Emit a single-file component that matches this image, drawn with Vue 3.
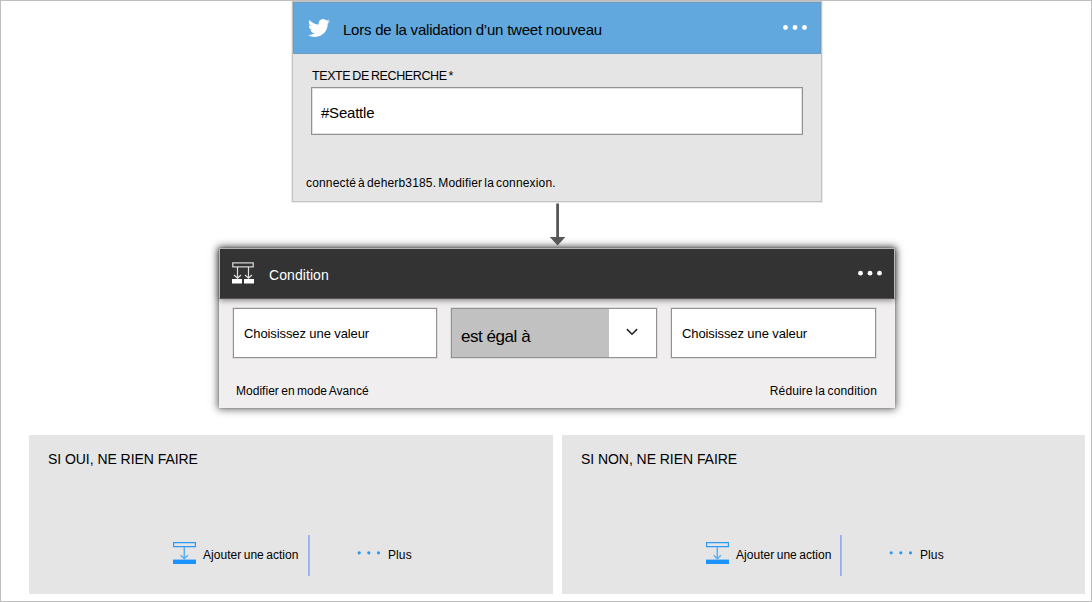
<script setup>
const branches = [
  { key: 'yes', title: 'SI OUI, NE RIEN FAIRE' },
  { key: 'no', title: 'SI NON, NE RIEN FAIRE' }
]
</script>

<template>
  <main class="designer">
    <section class="trigger">
      <header class="trigger-head">
        <svg class="bird" viewBox="0 0 24 24" width="24" height="24">
          <path fill="#fff" d="M23.95 4.57a10 10 0 0 1-2.82.77 4.96 4.96 0 0 0 2.16-2.72c-.95.55-2 .96-3.13 1.18a4.92 4.92 0 0 0-8.38 4.48C7.69 8.1 4.07 6.13 1.64 3.16a4.82 4.82 0 0 0-.67 2.48c0 1.71.87 3.21 2.19 4.1a4.9 4.9 0 0 1-2.23-.62v.06a4.92 4.92 0 0 0 3.95 4.83 5 5 0 0 1-2.21.08 4.94 4.94 0 0 0 4.6 3.42A9.87 9.87 0 0 1 0 19.54a14 14 0 0 0 7.55 2.21c9.05 0 14-7.5 14-13.98 0-.21 0-.42-.02-.63a9.94 9.94 0 0 0 2.42-2.57z" />
        </svg>
        <h2 class="trigger-title">Lors de la validation d’un tweet nouveau</h2>
        <svg class="dots" width="26" height="6" viewBox="0 0 26 6" fill="#fff">
          <circle cx="3.5" cy="2.5" r="2.4" /><circle cx="13" cy="2.5" r="2.4" /><circle cx="22.5" cy="2.5" r="2.4" />
        </svg>
      </header>
      <div class="trigger-body">
        <label class="field-label">TEXTE DE RECHERCHE<span class="star">*</span></label>
        <div class="search-field">#Seattle</div>
        <p class="connection">connecté à deherb3185. Modifier la connexion.</p>
      </div>
    </section>

    <svg class="arrow" width="18" height="45" viewBox="0 0 18 45" fill="#58585a">
      <path d="M7.2 1.5h2.8V35h6.4L8.6 43.5.8 35h6.4z" />
    </svg>

    <section class="condition">
      <header class="condition-head">
        <svg class="branch-icon" width="22" height="22" viewBox="0 0 22 22" fill="none">
          <path stroke="#d4d4d4" stroke-width="1.3" d="M.8.8h20.4v4H.8z" />
          <path stroke="#e0e0e0" stroke-width="1.2" d="M5.5 5v11M2 13l3.5 3.3L9 13M16.5 5v11M13 13l3.5 3.3L20 13" />
          <path fill="#fff" d="M0 17h10v4.5H0zM12 17h10v4.5H12z" />
        </svg>
        <h2 class="condition-title">Condition</h2>
        <svg class="dots" width="26" height="6" viewBox="0 0 26 6" fill="#fff">
          <circle cx="3.5" cy="3.2" r="2.4" /><circle cx="13" cy="3.2" r="2.4" /><circle cx="22.5" cy="3.2" r="2.4" />
        </svg>
      </header>
      <div class="condition-body">
        <div class="operands">
          <div class="value">Choisissez une valeur</div>
          <div class="operator">
            <span class="operator-text">est égal à</span>
            <span class="operator-toggle">
              <svg width="12" height="8" viewBox="0 0 12 8" fill="none">
                <path stroke="#222" stroke-width="1.5" d="M.9 1.1 6 6.3l5.1-5.2" />
              </svg>
            </span>
          </div>
          <div class="value last">Choisissez une valeur</div>
        </div>
        <div class="condition-links">
          <span class="advanced">Modifier en mode Avancé</span>
          <span class="collapse">Réduire la condition</span>
        </div>
      </div>
    </section>

    <div class="branches">
      <section v-for="b in branches" :key="b.key" class="branch" :class="b.key">
        <h3 class="branch-title">{{ b.title }}</h3>
        <div class="branch-actions">
          <svg class="add-icon" width="23" height="22" viewBox="0 0 23 22" fill="none">
            <path stroke="#2b9af3" stroke-width="1.2" d="M.6.6h21.8v4H.6z" />
            <path stroke="#5aaff2" stroke-width="1.5" d="M11.3 5v12M7.6 13.2l3.7 3.6 3.7-3.6" />
            <path fill="#1b93fa" d="M0 17.6h23V22H0z" />
          </svg>
          <span class="add-text">Ajouter une action</span>
          <span class="divider"></span>
          <svg class="more-dots" width="24" height="4" viewBox="0 0 24 4" fill="#2b98f3">
            <circle cx="2.2" cy="1.8" r="1.6" /><circle cx="11.8" cy="1.8" r="1.6" /><circle cx="21.5" cy="1.8" r="1.6" />
          </svg>
          <span class="more-text">Plus</span>
        </div>
      </section>
    </div>
  </main>
</template>

<style scoped>
.designer {
  box-sizing: border-box;
  width: 1092px;
  height: 602px;
  border: 1px solid #bfbfbf;
  background: #fff;
  color: #000;
  font-family: "Liberation Sans", Arial, sans-serif;
  overflow: hidden;
}

h2,
h3,
p {
  margin: 0;
  font-weight: 400;
}

svg {
  display: block;
  flex: none;
}

.trigger {
  box-sizing: border-box;
  width: 530px;
  height: 201px;
  margin-left: 291px;
  border: 1px solid #c2c2c2;
  background: #e5e5e5;
  box-shadow: 0 0 0 1px #ececec;
}

.trigger-head {
  box-sizing: border-box;
  display: flex;
  height: 52px;
  border: 1px solid #6c9cc0;
  background: #60a8dd;
}

.bird {
  width: 22px;
  height: 22px;
  margin: 14px 0 0 14px;
}

.trigger-title {
  flex: 1;
  margin: 17px 0 0 13px;
  font-size: 15px;
  line-height: 20px;
  letter-spacing: -0.22px;
}

.trigger-head .dots {
  margin: 22px 12px 0 0;
}

.trigger-body {
  padding: 14px 18px 0;
}

.field-label {
  display: block;
  height: 19px;
  padding-left: 1px;
  font-size: 12.5px;
  line-height: 16px;
  letter-spacing: -0.4px;
  word-spacing: -1px;
}

.star {
  margin-left: 2px;
}

.search-field {
  box-sizing: border-box;
  width: 492px;
  height: 48px;
  padding: 15px 9px 0;
  border: 1px solid #929292;
  box-shadow: inset 0 0 0 1px #e2e2e2;
  background: #fff;
  font-size: 15px;
  line-height: 20px;
  letter-spacing: -0.22px;
}

.connection {
  margin: 40px 0 0 -5px;
  font-size: 12px;
  line-height: 16px;
  letter-spacing: 0.16px;
  word-spacing: -1.4px;
}

.arrow {
  position: relative;
  z-index: 1;
  margin-left: 548px;
}

.condition {
  box-sizing: border-box;
  width: 676px;
  height: 160px;
  margin: 1px 0 0 218px;
  background: #f0eeef;
  box-shadow: 0 0 1px rgba(90, 90, 90, 0.7), 0 0 8px 1px rgba(0, 0, 0, 0.65);
}

.condition-head {
  box-sizing: border-box;
  position: relative;
  display: flex;
  height: 51px;
  border: 1px solid #b5b5b5;
  border-bottom-color: #555;
  background: #333;
  color: #fff;
  box-shadow: 0 1px 6px rgba(0, 0, 0, 0.5);
}

.branch-icon {
  margin: 13px 0 0 12px;
}

.condition-title {
  flex: 1;
  margin: 17px 0 0 15px;
  font-size: 14px;
  line-height: 18px;
  letter-spacing: 0.07px;
}

.condition-head .dots {
  margin: 21px 11px 0 0;
}

.condition-body {
  padding: 9px 18px 0 14px;
}

.operands {
  display: flex;
  gap: 14px;
}

.value,
.operator {
  box-sizing: border-box;
  height: 50px;
  border: 1px solid #929292;
  background: #fff;
  box-shadow: 0 0 0 1px #dcdcdc;
}

.value {
  width: 204px;
  padding: 16px 0 0 10px;
  font-size: 13px;
  line-height: 18px;
  letter-spacing: -0.1px;
}

.value.last {
  width: 205px;
}

.operator {
  display: flex;
  width: 206px;
  margin-right: 0;
}

.operator-text {
  flex: 1;
  padding: 18px 0 0 9px;
  background: #c1c1c1;
  font-size: 17px;
  line-height: 20px;
  letter-spacing: -0.45px;
}

.operator-toggle {
  width: 30px;
  padding: 19px 0 0 17px;
}

.condition-links {
  display: flex;
  justify-content: space-between;
  margin: 25px 0 0 3px;
  font-size: 12px;
  line-height: 16px;
  word-spacing: -1px;
}

.advanced {
  letter-spacing: 0.02px;
}

.collapse {
  letter-spacing: 0.16px;
}

.branches {
  display: flex;
  gap: 9px;
  margin: 27px 0 0 28px;
}

.branch {
  width: 524px;
  height: 159px;
  background: #e5e5e5;
}

.branch.no {
  width: 523px;
}

.branch-title {
  padding: 15px 0 0 19px;
  font-size: 14px;
  line-height: 18px;
  letter-spacing: -0.05px;
}

.branch-actions {
  display: flex;
  height: 41px;
  margin: 67px 0 0 144px;
}

.add-icon {
  margin-top: 7px;
}

.add-text {
  width: 97px;
  margin: 12px 0 0 7px;
  font-size: 12px;
  line-height: 16px;
  letter-spacing: 0.04px;
  word-spacing: -1px;
  white-space: nowrap;
}

.divider {
  width: 2px;
  margin: 0 47px 0 8px;
  background: linear-gradient(to right, #8ea8e8, #adc0ec);
}

.no .divider {
  margin-left: 7px;
}

.more-dots {
  margin-top: 16px;
}

.more-text {
  margin: 12px 0 0 7px;
  font-size: 12px;
  line-height: 16px;
  letter-spacing: 0.1px;
}
</style>
